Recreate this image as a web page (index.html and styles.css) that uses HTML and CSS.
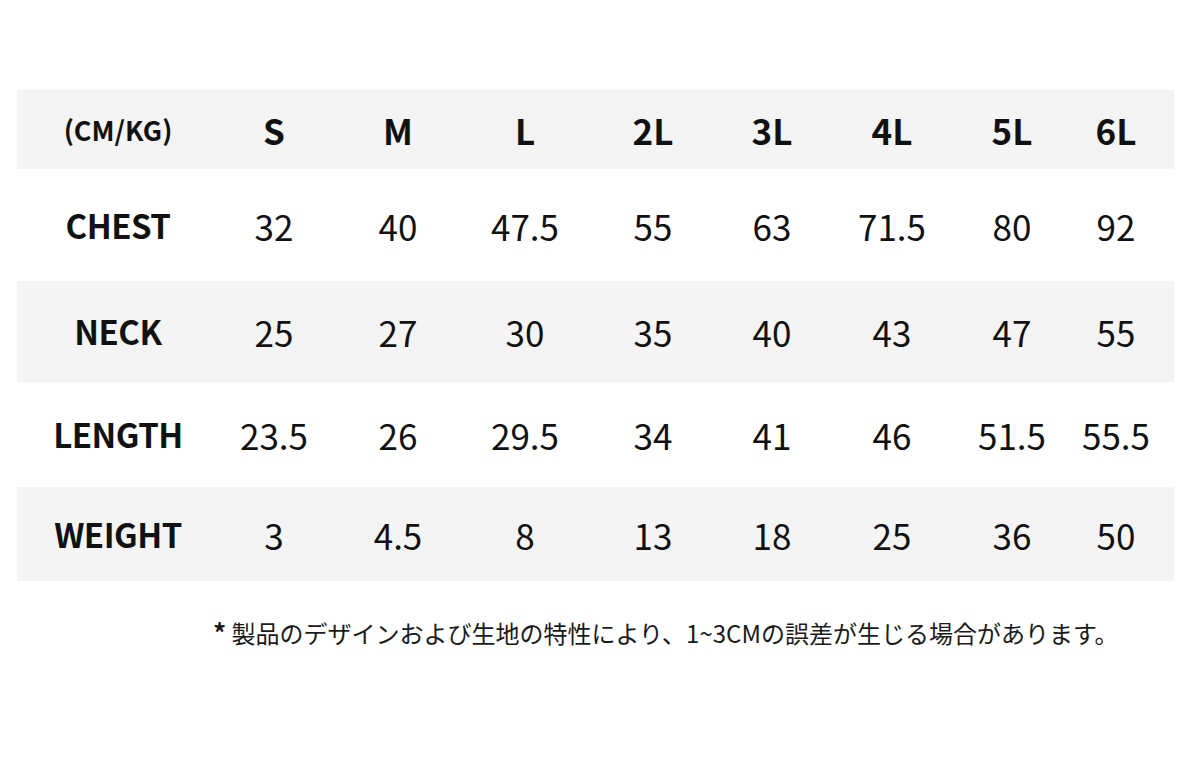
FILE: index.html
```html
<!DOCTYPE html>
<html lang="ja">
<head>
<meta charset="utf-8">
<title>Size chart</title>
<link rel="stylesheet" href="styles.css">
</head>
<body>
<div class="chart">
  <div class="row head r-head">
    <div class="cell label unit">(CM/KG)</div>
    <div class="cell">S</div><div class="cell">M</div><div class="cell">L</div><div class="cell">2L</div>
    <div class="cell">3L</div><div class="cell">4L</div><div class="cell">5L</div><div class="cell">6L</div>
  </div>
  <div class="row r-chest">
    <div class="cell label">CHEST</div>
    <div class="cell">32</div><div class="cell">40</div><div class="cell">47.5</div><div class="cell">55</div>
    <div class="cell">63</div><div class="cell">71.5</div><div class="cell">80</div><div class="cell">92</div>
  </div>
  <div class="row shade r-neck">
    <div class="cell label">NECK</div>
    <div class="cell">25</div><div class="cell">27</div><div class="cell">30</div><div class="cell">35</div>
    <div class="cell">40</div><div class="cell">43</div><div class="cell">47</div><div class="cell">55</div>
  </div>
  <div class="row r-length">
    <div class="cell label">LENGTH</div>
    <div class="cell">23.5</div><div class="cell">26</div><div class="cell">29.5</div><div class="cell">34</div>
    <div class="cell">41</div><div class="cell">46</div><div class="cell">51.5</div><div class="cell">55.5</div>
  </div>
  <div class="row shade r-weight">
    <div class="cell label">WEIGHT</div>
    <div class="cell">3</div><div class="cell">4.5</div><div class="cell">8</div><div class="cell">13</div>
    <div class="cell">18</div><div class="cell">25</div><div class="cell">36</div><div class="cell">50</div>
  </div>
  <p class="note"><span class="star">*</span> 製品のデザインおよび生地の特性により、1~3CMの誤差が生じる場合があります。</p>
</div>
</body>
</html>
```

FILE: styles.css
```css
html, body {
  margin: 0;
  padding: 0;
  background: #ffffff;
}

body {
  font-family: "Noto Sans CJK JP", "Noto Sans", sans-serif;
  color: #111111;
}

.chart {
  padding: 90px 0 0 17px;
  width: 1157px;
}

.row {
  display: grid;
  grid-template-columns: 202px 110px 138px 116px 140px 98px 142px 98px 110px;
  align-items: center;
  font-size: 35px;
  line-height: 1;
}

.head,
.shade {
  background: #f4f4f4;
}

.r-head { height: 79px; font-weight: 700; }
.r-chest { height: 112px; }
.r-neck { height: 101px; }
.r-length { height: 105px; }
.r-weight { height: 94px; }

.cell {
  text-align: center;
  white-space: nowrap;
}

.label {
  font-weight: 700;
  font-size: 33px;
  letter-spacing: -0.5px;
}

.unit {
  font-size: 27px;
  letter-spacing: 0;
}

.note {
  margin: 36px 0 0 196px;
  font-size: 24px;
  line-height: 30px;
  white-space: nowrap;
  color: #1a1a1a;
}

.star {
  font-weight: 700;
  font-size: 26px;
}
```
